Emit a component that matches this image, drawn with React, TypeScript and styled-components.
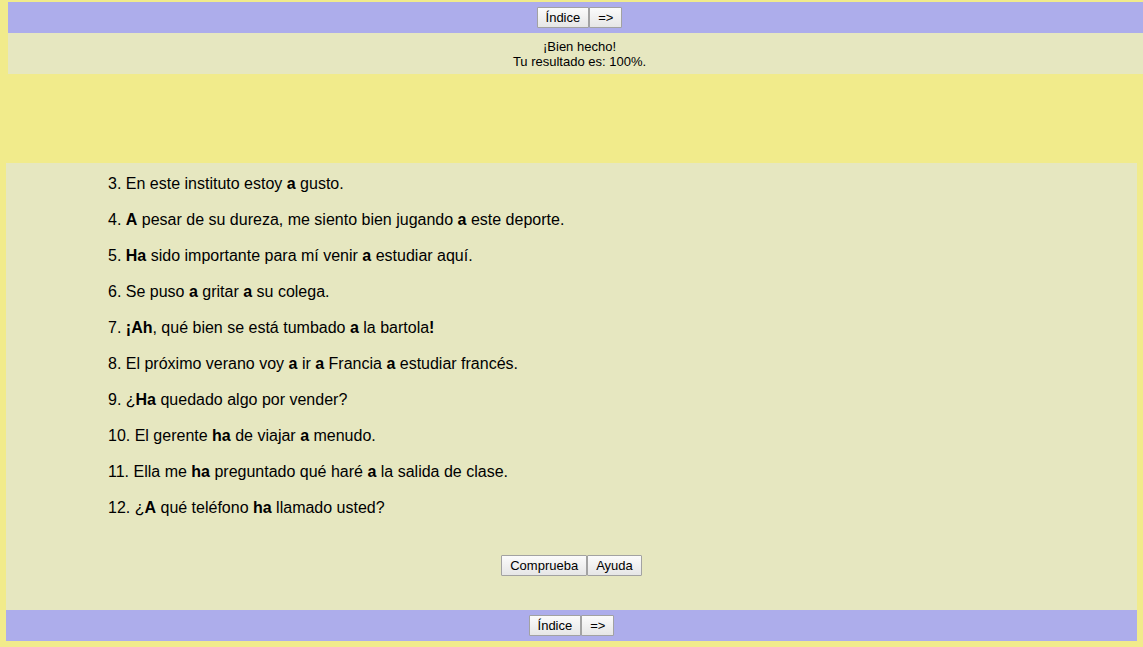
import React from "react";
import styled, { createGlobalStyle } from "styled-components";

const GlobalStyle = createGlobalStyle`
	html, body {
		margin: 0;
		padding: 0;
	}
	body {
		background: #f1eb8b;
		font-family: "Liberation Sans", Arial, sans-serif;
		color: #000;
		overflow-x: hidden;
	}
`;

const Page = styled.div`
	padding-top: 2px;
	padding-bottom: 6px;
`;

const TopArea = styled.div`
	margin-left: 8px;
	width: 100%;
`;

const NavBar = styled.div`
	background: #adadeb;
	height: 31px;
	display: flex;
	justify-content: center;
	align-items: center;
`;

const Feedback = styled.div`
	background: #e6e7c0;
	height: 41px;
	box-sizing: border-box;
	padding-top: 6px;
	text-align: center;
	font-size: 13px;
	line-height: 15px;
`;

const Spacer = styled.div`
	height: 89px;
`;

const Main = styled.div`
	margin: 0 6px;
	background: #e6e7c0;
	padding: 1px 0 34px;
`;

const Question = styled.p<{ $first?: boolean }>`
	margin: 0;
	padding-left: 102px;
	font-size: 16px;
	line-height: 20px;
	margin-top: ${(p) => (p.$first ? "10px" : "16px")};
`;

const ButtonRow = styled.div`
	display: flex;
	justify-content: center;
	margin-top: 37px;
`;

const Btn = styled.button`
	font-family: "Liberation Sans", Arial, sans-serif;
	font-size: 13px;
	height: 21px;
	padding: 0 8px;
	margin: 0;
	color: #000;
	background: linear-gradient(#fbfbfb, #e6e6e6);
	border: 1px solid #a2a2a2;
	border-radius: 1px;
	cursor: pointer;
`;

const BottomNav = styled(NavBar)`
	margin: 0 6px;
`;

const questions: React.ReactNode[] = [
	<>3. En este instituto estoy <b>a</b> gusto.</>,
	<>4. <b>A</b> pesar de su dureza, me siento bien jugando <b>a</b> este deporte.</>,
	<>5. <b>Ha</b> sido importante para mí venir <b>a</b> estudiar aquí.</>,
	<>6. Se puso <b>a</b> gritar <b>a</b> su colega.</>,
	<>7. <b>¡Ah</b>, qué bien se está tumbado <b>a</b> la bartola<b>!</b></>,
	<>8. El próximo verano voy <b>a</b> ir <b>a</b> Francia <b>a</b> estudiar francés.</>,
	<>9. ¿<b>Ha</b> quedado algo por vender?</>,
	<>10. El gerente <b>ha</b> de viajar <b>a</b> menudo.</>,
	<>11. Ella me <b>ha</b> preguntado qué haré <b>a</b> la salida de clase.</>,
	<>12. ¿<b>A</b> qué teléfono <b>ha</b> llamado usted?</>,
];

const App = () => {
	return (
		<>
			<GlobalStyle />
			<Page>
				<TopArea>
					<NavBar>
						<Btn>Índice</Btn>
						<Btn>=&gt;</Btn>
					</NavBar>
					<Feedback>
						¡Bien hecho!
						<br />
						Tu resultado es: 100%.
					</Feedback>
				</TopArea>
				<Spacer />
				<Main>
					{questions.map((q, i) => (
						<Question key={i} $first={i === 0}>
							{q}
						</Question>
					))}
					<ButtonRow>
						<Btn>Comprueba</Btn>
						<Btn>Ayuda</Btn>
					</ButtonRow>
				</Main>
				<BottomNav>
					<Btn>Índice</Btn>
					<Btn>=&gt;</Btn>
				</BottomNav>
			</Page>
		</>
	);
};

export default App;
